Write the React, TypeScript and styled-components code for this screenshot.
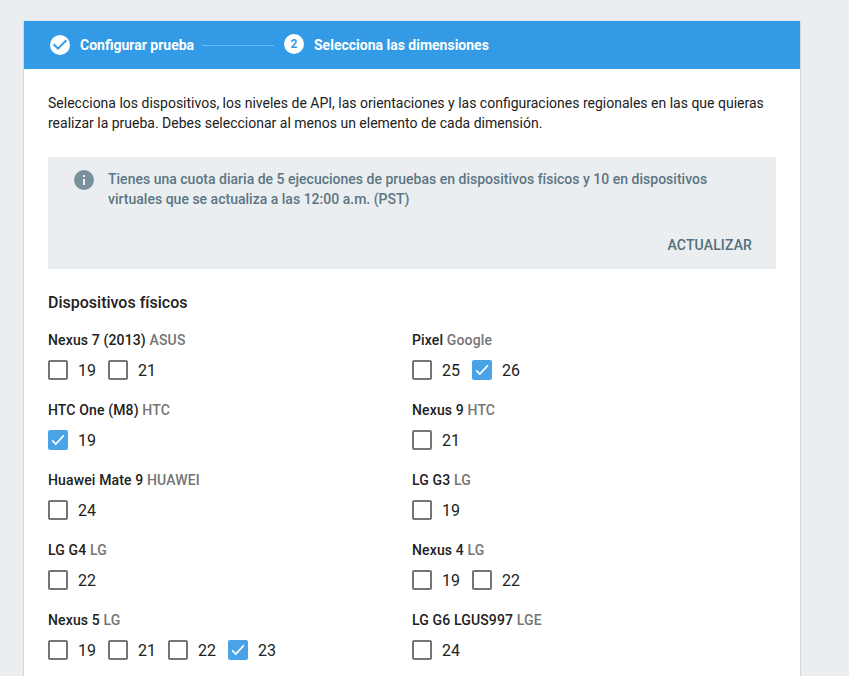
import React from "react";
import styled, { createGlobalStyle } from "styled-components";

const Global = createGlobalStyle`
  * { box-sizing: border-box; }
  html, body { margin: 0; height: 100%; overflow: hidden; background: #eaeef1; }
  body { font-family: Roboto, "Noto Sans", sans-serif; font-size: 14px; line-height: 20px; color: #212121; }
`;
const Page = styled.div`height: 676px; padding: 21px 49px 0 24px; overflow: hidden;`;
const Card = styled.main`height: 700px; background: #fff; box-shadow: 0 1px 2px rgba(0,0,0,.3);`;
const Stepper = styled.header`
  height: 48px; padding-left: 26px; display: flex; align-items: center;
  background: #339be5; color: #fff; font-weight: 700;
`;
const Badge = styled.span`
  width: 20px; height: 20px; border-radius: 50%; background: #fff; color: #339be5;
  display: flex; align-items: center; justify-content: center; flex: none; font-size: 12px;
  margin-bottom: ${(p: { $raised?: boolean }) => (p.$raised ? 2 : 0)}px;
`;
const StepLabel = styled.span`margin-left: 10px; white-space: nowrap; width: ${(p: { $w: number }) => p.$w}px;`;
const Connector = styled.span`width: 72px; height: 1px; margin: 0 10px 0 8px; background: #64bdf4;`;
const Body = styled.div`padding: 24px 24px 0;`;
const Intro = styled.p`margin: 0 0 24px; white-space: nowrap;`;
const Notice = styled.section`
  height: 112px; padding: 13px 24px 14px 26px; display: flex; flex-direction: column;
  justify-content: space-between; background: #eaeef1; color: #5c7682; font-weight: 500;
`;
const NoticeRow = styled.div`display: flex; gap: 14px; white-space: nowrap;`;
const NoticeText = styled.div`margin-top: -1px; letter-spacing: .01px;`;
const Refresh = styled.button`
  align-self: flex-end; padding: 0; border: 0; background: none; color: #546e7a;
  font: 500 14px/20px Roboto, sans-serif; letter-spacing: .14px;
`;
const Title = styled.h2`margin: 24px 0 17px; font-size: 16px; line-height: 20px; font-weight: 500;`;
const Devices = styled.div`display: grid; grid-template-columns: 1fr 1fr; grid-auto-rows: 70px;`;
const Name = styled.h3`margin: 0; font-size: 14px; line-height: 20px; font-weight: 500; letter-spacing: .14px;`;
const Maker = styled.span`color: #757575;`;
const Levels = styled.div`display: flex; margin-top: 10px;`;
const Level = styled.label`width: 60px; height: 20px; display: flex; gap: 10px; font-size: 16px; line-height: 22px;`;
const Box = styled.span`
  width: 20px; height: 20px; flex: none; border-radius: 2px; line-height: 0;
  border: ${(p: { $on: boolean }) => (p.$on ? "0" : "2px solid #757575")};
  background: ${(p) => (p.$on ? "#4ba3e7" : "#fff")};
`;

type Api = [number, boolean?];
const devices: { name: string; maker: string; levels: Api[] }[] = [
  { name: "Nexus 7 (2013)", maker: "ASUS", levels: [[19], [21]] },
  { name: "Pixel", maker: "Google", levels: [[25], [26, true]] },
  { name: "HTC One (M8)", maker: "HTC", levels: [[19, true]] },
  { name: "Nexus 9", maker: "HTC", levels: [[21]] },
  { name: "Huawei Mate 9", maker: "HUAWEI", levels: [[24]] },
  { name: "LG G3", maker: "LG", levels: [[19]] },
  { name: "LG G4", maker: "LG", levels: [[22]] },
  { name: "Nexus 4", maker: "LG", levels: [[19], [22]] },
  { name: "Nexus 5", maker: "LG", levels: [[19], [21], [22], [23, true]] },
  { name: "LG G6 LGUS997", maker: "LGE", levels: [[24]] },
];

const StepCheck = () => (
  <svg width="20" height="20" viewBox="0 0 20 20" fill="none" stroke="#339be5" strokeWidth="2">
    <path d="M3.7 9.3 8 13.6 16.3 5.3" />
  </svg>
);
const BoxCheck = () => (
  <svg width="20" height="20" viewBox="0 0 20 20" fill="none" stroke="#fff" strokeWidth="1.6">
    <path d="M4.2 10.4 7.8 14 15.8 5.4" />
  </svg>
);

export default function App() {
  return (
    <>
      <Global />
      <Page>
        <Card>
          <Stepper>
            <Badge><StepCheck /></Badge>
            <StepLabel $w={114}>Configurar prueba</StepLabel>
            <Connector />
            <Badge $raised>2</Badge>
            <StepLabel $w={176}>Selecciona las dimensiones</StepLabel>
          </Stepper>
          <Body>
            <Intro>
              Selecciona los dispositivos, los niveles de API, las orientaciones y las configuraciones regionales en las que quieras<br />
              realizar la prueba. Debes seleccionar al menos un elemento de cada dimensión.
            </Intro>
            <Notice>
              <NoticeRow>
                <svg width="20" height="20" viewBox="0 0 20 20">
                  <circle cx="10" cy="10" r="10" fill="#78909c" />
                  <path d="M9 5h2v2H9zM9 9h2v6H9z" fill="#eceff1" />
                </svg>
                <NoticeText>
                  Tienes una cuota diaria de 5 ejecuciones de pruebas en dispositivos físicos y 10 en dispositivos<br />
                  virtuales que se actualiza a las 12:00 a.m. (PST)
                </NoticeText>
              </NoticeRow>
              <Refresh>ACTUALIZAR</Refresh>
            </Notice>
            <Title>Dispositivos físicos</Title>
            <Devices>
              {devices.map((d) => (
                <section key={d.name}>
                  <Name>{d.name} <Maker>{d.maker}</Maker></Name>
                  <Levels>
                    {d.levels.map(([api, on]) => (
                      <Level key={api}>
                        <Box $on={!!on}>{on && <BoxCheck />}</Box>
                        {api}
                      </Level>
                    ))}
                  </Levels>
                </section>
              ))}
            </Devices>
          </Body>
        </Card>
      </Page>
    </>
  );
}
